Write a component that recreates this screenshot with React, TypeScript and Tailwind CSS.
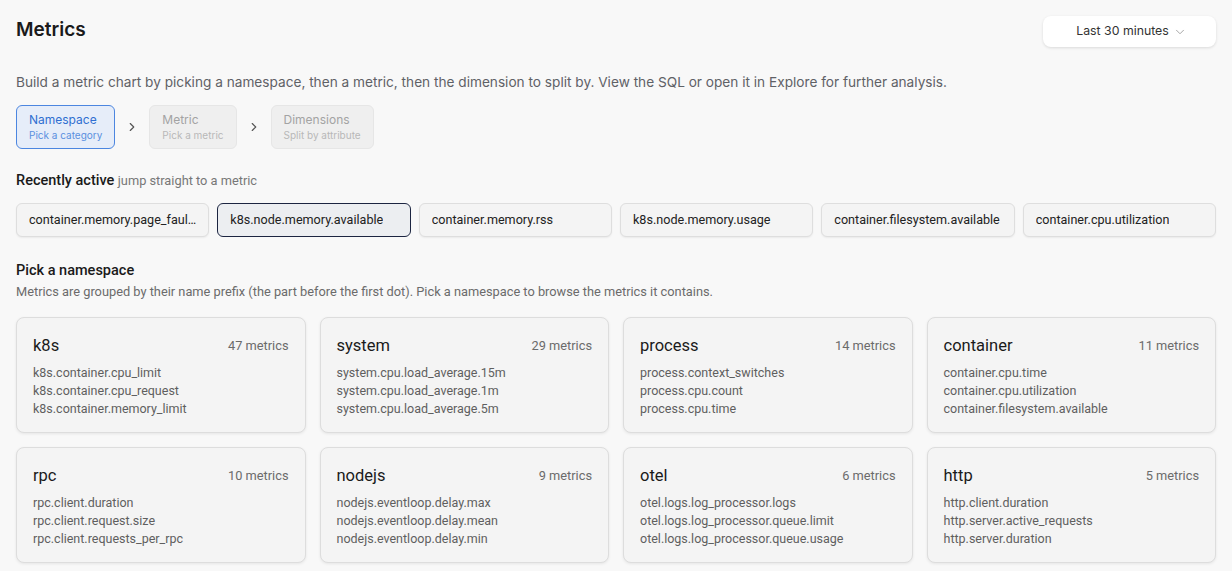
import React from 'react';
import { ChevronDown, ChevronRight } from 'lucide-react';

const recent = [
  'container.memory.page_faults',
  'k8s.node.memory.available',
  'container.memory.rss',
  'k8s.node.memory.usage',
  'container.filesystem.available',
  'container.cpu.utilization',
];

const namespaces = [
  { name: 'k8s', count: 47, metrics: ['k8s.container.cpu_limit', 'k8s.container.cpu_request', 'k8s.container.memory_limit'] },
  { name: 'system', count: 29, metrics: ['system.cpu.load_average.15m', 'system.cpu.load_average.1m', 'system.cpu.load_average.5m'] },
  { name: 'process', count: 14, metrics: ['process.context_switches', 'process.cpu.count', 'process.cpu.time'] },
  { name: 'container', count: 11, metrics: ['container.cpu.time', 'container.cpu.utilization', 'container.filesystem.available'] },
  { name: 'rpc', count: 10, metrics: ['rpc.client.duration', 'rpc.client.request.size', 'rpc.client.requests_per_rpc'] },
  { name: 'nodejs', count: 9, metrics: ['nodejs.eventloop.delay.max', 'nodejs.eventloop.delay.mean', 'nodejs.eventloop.delay.min'] },
  { name: 'otel', count: 6, metrics: ['otel.logs.log_processor.logs', 'otel.logs.log_processor.queue.limit', 'otel.logs.log_processor.queue.usage'] },
  { name: 'http', count: 5, metrics: ['http.client.duration', 'http.server.active_requests', 'http.server.duration'] },
];

const steps = [
  { title: 'Namespace', sub: 'Pick a category', active: true },
  { title: 'Metric', sub: 'Pick a metric', active: false },
  { title: 'Dimensions', sub: 'Split by attribute', active: false },
];

export default function App() {
  return (
    <div className="min-h-[571px] bg-[#f8f8f8] px-4 pt-4 font-['Inter',sans-serif] text-[#1a1a1a]">
      {/* header */}
      <div className="flex items-start justify-between">
        <h1 className="pt-[1px] text-[19px] font-semibold leading-[26px]">Metrics</h1>
        <button className="flex h-[31px] w-[173px] items-center justify-center gap-1 rounded-lg bg-white pl-1 text-[12.3px] text-[#333] shadow-[0_1px_3px_rgba(0,0,0,0.12)]">
          Last 30 minutes
          <ChevronDown size={14} strokeWidth={1.5} className="text-[#999]" />
        </button>
      </div>

      <p className="mt-[25px] text-[13.65px] leading-[20px] text-[#5f6166]">
        Build a metric chart by picking a namespace, then a metric, then the dimension to split by. View the SQL or open it in Explore for further analysis.
      </p>

      {/* stepper */}
      <div className="mt-[13px] flex items-center">
        {steps.map((s, i) => (
          <React.Fragment key={s.title}>
            {i > 0 && (
              <ChevronRight size={14} strokeWidth={2} className="mx-[10px] text-[#555]" />
            )}
            <div
              className={
                s.active
                  ? 'flex h-[44px] flex-col justify-center rounded-md border border-[#4c86e0] bg-[#e6edf9] px-3'
                  : 'flex h-[44px] flex-col justify-center rounded-md border border-[#e6e6e6] bg-[#efefef] px-3'
              }
            >
              <div className={s.active ? 'text-[12px] leading-[16px] text-[#2f6fd1]' : 'text-[12px] leading-[16px] text-[#a3a3a3]'}>{s.title}</div>
              <div className={s.active ? 'text-[10px] leading-[15px] text-[#5a90e0]' : 'text-[10px] leading-[15px] text-[#b8b8b8]'}>{s.sub}</div>
            </div>
          </React.Fragment>
        ))}
      </div>

      {/* recently active */}
      <div className="mt-[22px] font-['Roboto',sans-serif]">
        <div className="text-[14px] leading-[18px]">
          <span className="text-[14.5px] font-medium text-[#1a1a1a]">Recently active</span>{' '}
          <span className="text-[12.8px] text-[#777]">jump straight to a metric</span>
        </div>
        <div className="mt-[13px] grid grid-cols-6 gap-2">
          {recent.map((m, i) => (
            <div
              key={m}
              className={
                i === 1
                  ? 'flex h-[34px] items-center rounded-md border border-[#1c2541] bg-[#eceef1] px-3 text-[12.6px] text-[#222]'
                  : 'flex h-[34px] items-center rounded-md border border-[#dedede] bg-[#f4f4f4] px-3 text-[12.6px] text-[#222] shadow-[0_1px_2px_rgba(0,0,0,0.06)]'
              }
            >
              <span className="truncate">{m}</span>
            </div>
          ))}
        </div>
      </div>

      {/* namespaces */}
      <div className="mt-[25px] font-['Roboto',sans-serif]">
        <div className="text-[14.5px] font-medium leading-[18px] text-[#1a1a1a]">Pick a namespace</div>
        <div className="mt-[4px] text-[12.8px] leading-[16px] text-[#6b6b6b]">
          Metrics are grouped by their name prefix (the part before the first dot). Pick a namespace to browse the metrics it contains.
        </div>
        <div className="mt-[17px] grid grid-cols-4 gap-3.5">
          {namespaces.map((ns) => (
            <div
              key={ns.name}
              className="h-[116px] rounded-lg border border-[#dddddd] bg-[#f4f4f4] px-4 pt-[17px] shadow-[0_1px_3px_rgba(0,0,0,0.08)]"
            >
              <div className="flex items-center justify-between">
                <span className="text-[16.5px] leading-[22px] text-[#1a1a1a]">{ns.name}</span>
                <span className="text-[12.8px] text-[#6b6b6b]">{ns.count} metrics</span>
              </div>
              <div className="mt-[7px] flex flex-col text-[12.5px] leading-[18px] text-[#5f5f5f]">
                {ns.metrics.map((m) => (
                  <span key={m}>{m}</span>
                ))}
              </div>
            </div>
          ))}
        </div>
      </div>
    </div>
  );
}
